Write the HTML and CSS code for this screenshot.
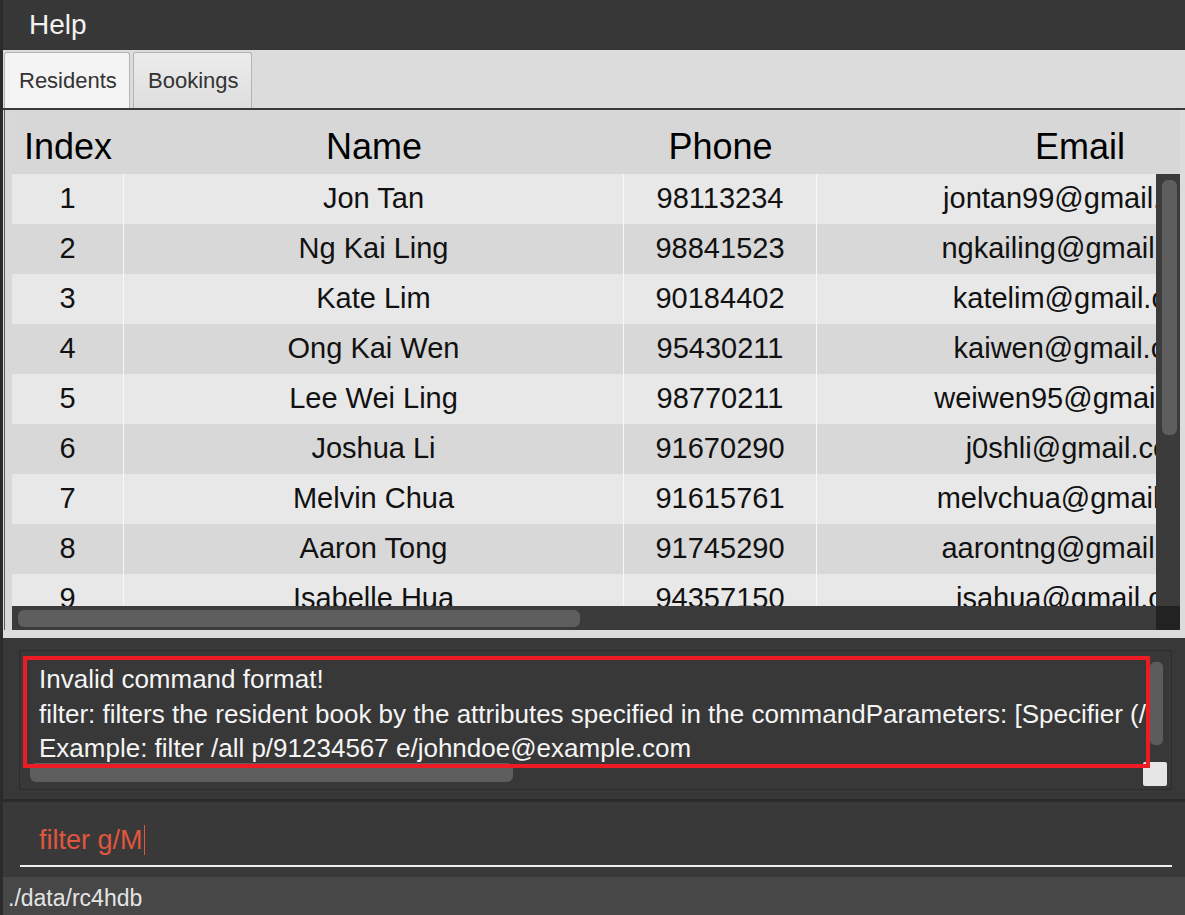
FILE: index.html
```html
<!DOCTYPE html>
<html lang="en">
<head>
<meta charset="utf-8">
<title>RC4HDB</title>
<link rel="stylesheet" href="styles.css">
</head>
<body>
<div class="app">
  <div class="menubar"><span class="menu-item">Help</span></div>
  <div class="tabbar">
    <div class="tab selected">Residents</div>
    <div class="tab">Bookings</div>
  </div>
  <div class="tab-content">
    <div class="table-frame">
      <div class="table">
        <div class="thead">
          <div class="hcell col-index">Index</div>
          <div class="hcell col-name">Name</div>
          <div class="hcell col-phone">Phone</div>
          <div class="hcell col-email">Email</div>
        </div>
        <div class="tbody-wrap">
          <div class="tbody">
            <div class="row odd"><div class="cell col-index">1</div><div class="cell col-name">Jon Tan</div><div class="cell col-phone">98113234</div><div class="cell col-email">jontan99@gmail.com</div></div>
            <div class="row even"><div class="cell col-index">2</div><div class="cell col-name">Ng Kai Ling</div><div class="cell col-phone">98841523</div><div class="cell col-email">ngkailing@gmail.com</div></div>
            <div class="row odd"><div class="cell col-index">3</div><div class="cell col-name">Kate Lim</div><div class="cell col-phone">90184402</div><div class="cell col-email">katelim@gmail.com</div></div>
            <div class="row even"><div class="cell col-index">4</div><div class="cell col-name">Ong Kai Wen</div><div class="cell col-phone">95430211</div><div class="cell col-email">kaiwen@gmail.com</div></div>
            <div class="row odd"><div class="cell col-index">5</div><div class="cell col-name">Lee Wei Ling</div><div class="cell col-phone">98770211</div><div class="cell col-email">weiwen95@gmail.com</div></div>
            <div class="row even"><div class="cell col-index">6</div><div class="cell col-name">Joshua Li</div><div class="cell col-phone">91670290</div><div class="cell col-email">j0shli@gmail.com</div></div>
            <div class="row odd"><div class="cell col-index">7</div><div class="cell col-name">Melvin Chua</div><div class="cell col-phone">91615761</div><div class="cell col-email">melvchua@gmail.com</div></div>
            <div class="row even"><div class="cell col-index">8</div><div class="cell col-name">Aaron Tong</div><div class="cell col-phone">91745290</div><div class="cell col-email">aarontng@gmail.com</div></div>
            <div class="row odd"><div class="cell col-index">9</div><div class="cell col-name">Isabelle Hua</div><div class="cell col-phone">94357150</div><div class="cell col-email">isahua@gmail.com</div></div>
          </div>
          <div class="vscroll"><div class="vthumb"></div></div>
        </div>
        <div class="hscroll-row">
          <div class="hscroll"><div class="hthumb"></div></div>
          <div class="corner"></div>
        </div>
      </div>
    </div>
  </div>
  <div class="result-pane">
    <div class="result-box">
      <div class="result-text">Invalid command format!
filter: filters the resident book by the attributes specified in the commandParameters: [Specifier (/all or /any)] [p/PHONE] [e/EMAIL]
Example: filter /all p/91234567 e/johndoe@example.com</div>
      <div class="r-vthumb"></div>
      <div class="r-hthumb"></div>
      <div class="r-corner"></div>
      <div class="highlight"></div>
    </div>
  </div>
  <div class="command-pane">
    <div class="command-field"><span class="command-text">filter g/M</span><span class="caret"></span></div>
  </div>
  <div class="status">./data/rc4hdb</div>
</div>
</body>
</html>
```

FILE: styles.css
```css
* { box-sizing: border-box; }

html, body {
  margin: 0;
  padding: 0;
  width: 1185px;
  height: 915px;
  overflow: hidden;
  background: #383838;
  font-family: "Liberation Sans", Arial, sans-serif;
}

.app {
  width: 1185px;
  height: 915px;
  display: flex;
  flex-direction: column;
  border-left: 3px solid #2b2b2b;
  background: #383838;
}

.menubar {
  height: 50px;
  flex: none;
  background: #373737;
  display: flex;
  align-items: center;
  padding-left: 26px;
}

.menu-item {
  color: #f2f2f2;
  font-size: 28px;
}

.tabbar {
  height: 58px;
  flex: none;
  background: #dcdcdc;
  display: flex;
  align-items: flex-end;
  gap: 3px;
  padding-left: 1px;
}

.tab {
  height: 56px;
  display: flex;
  align-items: center;
  padding: 0 12px 0 14px;
  font-size: 22px;
  color: #333333;
  border: 1px solid #b4b4b4;
  border-bottom: none;
  border-radius: 3px 3px 0 0;
  background: linear-gradient(#ececec, #dedede);
}

.tab.selected {
  background: #f4f4f4;
  width: 126px;
}

.tab-content {
  flex: none;
  height: 530px;
  background: #dcdcdc;
  border-top: 2px solid #3a3a3a;
  padding: 0 5px 8px 1px;
}

.table-frame {
  height: 100%;
  background: #d8d8d8;
  border-left: 1px solid #5a5a5a;
  padding-left: 7px;
}

.table {
  width: 1168px;
  display: flex;
  flex-direction: column;
}

.thead {
  height: 64px;
  display: flex;
  background: #d7d7d7;
  overflow: hidden;
  white-space: nowrap;
}

.hcell {
  flex: none;
  font-size: 36px;
  color: #000;
  text-align: center;
  padding-top: 16px;
  overflow: hidden;
}

.col-index { width: 112px; }
.col-name { width: 500px; }
.col-phone { width: 193px; }
.col-email { width: 526px; }

.tbody-wrap {
  height: 432px;
  display: flex;
}

.tbody {
  width: 1144px;
  overflow: hidden;
}

.row {
  height: 50px;
  display: flex;
  white-space: nowrap;
}

.row.odd { background: #e8e8e8; }
.row.even { background: #d8d8d8; }

.cell {
  flex: none;
  height: 50px;
  font-size: 29px;
  color: #111;
  text-align: center;
  line-height: 48px;
  overflow: hidden;
  border-right: 1px solid #f7f7f7;
}

.vscroll {
  width: 24px;
  flex: none;
  background: #3b3b3b;
  padding: 6px 3px 0 6px;
}

.vthumb {
  height: 255px;
  background: #5e5e5e;
  border-radius: 6px;
}

.hscroll-row {
  height: 24px;
  display: flex;
}

.hscroll {
  width: 1144px;
  background: #3b3b3b;
  padding: 4px 0 3px 6px;
}

.hthumb {
  width: 562px;
  height: 100%;
  background: #5e5e5e;
  border-radius: 6px;
}

.corner {
  width: 24px;
  background: #222222;
}

.result-pane {
  flex: none;
  height: 161px;
  padding: 12px 13px 0 16px;
  background: #383838;
}

.result-box {
  position: relative;
  height: 140px;
  border: 1px solid #2c2c2c;
  background: #383838;
}

.result-text {
  width: 1126px;
  height: 138px;
  padding: 11px 0 0 19px;
  overflow: hidden;
  white-space: pre;
  font-size: 26px;
  line-height: 34.6px;
  color: #f5f5f5;
}

.r-vthumb {
  position: absolute;
  left: 1130px;
  top: 11px;
  width: 13px;
  height: 83px;
  background: #5c5c5c;
  border-radius: 5px;
}

.r-hthumb {
  position: absolute;
  left: 10px;
  top: 112px;
  width: 483px;
  height: 19px;
  background: #5e5e5e;
  border-radius: 6px;
}

.r-corner {
  position: absolute;
  left: 1123px;
  top: 111px;
  width: 24px;
  height: 24px;
  background: #e6e6e6;
  border-radius: 2px;
}

.highlight {
  position: absolute;
  left: 3px;
  top: 5px;
  width: 1127px;
  height: 112px;
  border: 4px solid #ed1c24;
}

.command-pane {
  flex: none;
  height: 78px;
  border-top: 3px solid #2b2b2b;
  padding: 0 13px 0 17px;
  background: #393939;
}

.command-field {
  height: 65px;
  padding: 13px 0 0 19px;
  border-bottom: 2px solid #f0f0f0;
  display: flex;
  align-items: center;
}

.command-text {
  font-size: 27px;
  color: #e0563f;
}

.caret {
  width: 1.5px;
  height: 30px;
  margin-left: 1px;
  background: #e0563f;
}

.status {
  flex: 1;
  background: #474747;
  color: #e4e4e4;
  font-size: 23px;
  padding: 8px 0 0 5px;
}
```
